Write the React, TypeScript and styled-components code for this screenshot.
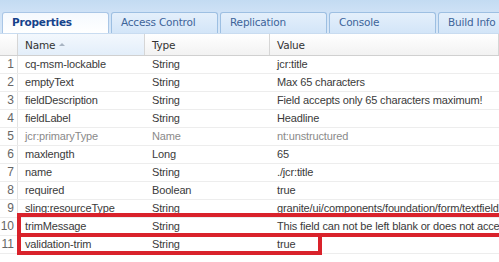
import styled, { createGlobalStyle } from "styled-components";

const GlobalStyle = createGlobalStyle`
  * { box-sizing: border-box; }
  body {
    margin: 0;
    background: #ffffff;
    font-family: "Liberation Sans", Arial, sans-serif;
  }
`;

const Page = styled.div`
  width: 499px;
  height: 262px;
  overflow: hidden;
  background: #ffffff;
`;

const TabStrip = styled.div`
  height: 34px;
  display: flex;
  align-items: flex-end;
  gap: 2px;
  padding-left: 2px;
  background: linear-gradient(#c3dbf2, #cfe2f6 40%, #d9e8f8);
  border-bottom: 1px solid #c9dcf0;
`;

const Tab = styled.div<{ $active?: boolean }>`
  flex: 0 0 107px;
  height: 21px;
  padding: 3px 0 0 9px;
  border: 1px solid ${(p) => (p.$active ? "#a9c6e6" : "#9dbfe2")};
  border-bottom: none;
  border-radius: 3px 3px 0 0;
  font-family: "DejaVu Sans", Tahoma, sans-serif;
  font-size: 10.5px;
  letter-spacing: -0.2px;
  font-weight: ${(p) => (p.$active ? 700 : 400)};
  color: ${(p) => (p.$active ? "#15428b" : "#3d6499")};
  background: ${(p) =>
    p.$active
      ? "linear-gradient(#f5f9fe, #ffffff)"
      : "linear-gradient(#e4effb, #d3e5f8)"};
`;

const Grid = styled.div`
  display: flex;
  flex-direction: column;
`;

const HeaderRow = styled.div`
  display: grid;
  grid-template-columns: 18px 127px 125px 1fr;
  height: 22px;
  background: linear-gradient(#ffffff, #f2f2f2);
  border-bottom: 1px solid #d0d0d0;
`;

const HeadCell = styled.div<{ $sorted?: boolean }>`
  display: flex;
  align-items: center;
  gap: 4px;
  padding-left: 7px;
  font-family: "DejaVu Sans", Tahoma, sans-serif;
  font-size: 10.5px;
  letter-spacing: -0.2px;
  color: #333333;
  border-right: 1px solid #d6d6d6;
  background: ${(p) =>
    p.$sorted ? "linear-gradient(#f3f8fd, #e3eefa)" : "transparent"};
`;

const SortArrow = styled.span`
  width: 0;
  height: 0;
  border-left: 3px solid transparent;
  border-right: 3px solid transparent;
  border-bottom: 3px solid #a8b4c2;
  margin-top: -1px;
`;

const Row = styled.div`
  position: relative;
  display: grid;
  grid-template-columns: 18px 127px 125px 1fr;
  height: 18px;
  border-bottom: 1px solid #ededed;
  font-size: 11px;
  letter-spacing: -0.15px;
`;

const NumCell = styled.div`
  text-align: right;
  padding-right: 3px;
  line-height: 17px;
  font-size: 12px;
  letter-spacing: 0;
  color: #666666;
  border-right: 1px solid #e4e4e4;
`;

const Cell = styled.div<{ $muted?: boolean }>`
  padding-left: 7px;
  line-height: 17px;
  white-space: nowrap;
  overflow: hidden;
  color: ${(p) => (p.$muted ? "#8a8a8a" : "#3a3a3a")};
`;

const Highlight = styled.div<{ $top: number; $height: number; $width: number }>`
  position: absolute;
  left: 17px;
  top: ${(p) => p.$top}px;
  height: ${(p) => p.$height}px;
  width: ${(p) => p.$width}px;
  border: 4px solid #d9222b;
  pointer-events: none;
`;

type Prop = {
  name: string;
  type: string;
  value: string;
  muted?: boolean;
  mark?: { top: number; height: number; width: number };
};

const tabs = ["Properties", "Access Control", "Replication", "Console", "Build Info"];

const props: Prop[] = [
  { name: "cq-msm-lockable", type: "String", value: "jcr:title" },
  { name: "emptyText", type: "String", value: "Max 65 characters" },
  { name: "fieldDescription", type: "String", value: "Field accepts only 65 characters maximum!" },
  { name: "fieldLabel", type: "String", value: "Headline" },
  { name: "jcr:primaryType", type: "Name", value: "nt:unstructured", muted: true },
  { name: "maxlength", type: "Long", value: "65" },
  { name: "name", type: "String", value: "./jcr:title" },
  { name: "required", type: "Boolean", value: "true" },
  { name: "sling:resourceType", type: "String", value: "granite/ui/components/foundation/form/textfield" },
  {
    name: "trimMessage",
    type: "String",
    value: "This field can not be left blank or does not accept white spaces",
    mark: { top: -5, height: 24, width: 500 },
  },
  {
    name: "validation-trim",
    type: "String",
    value: "true",
    mark: { top: -3, height: 22, width: 305 },
  },
];

export default function App() {
  return (
    <>
      <GlobalStyle />
      <Page>
        <TabStrip>
          {tabs.map((t, i) => (
            <Tab key={t} $active={i === 0}>
              {t}
            </Tab>
          ))}
        </TabStrip>
        <Grid>
          <HeaderRow>
            <HeadCell />
            <HeadCell $sorted>
              Name <SortArrow />
            </HeadCell>
            <HeadCell>Type</HeadCell>
            <HeadCell>Value</HeadCell>
          </HeaderRow>
          {props.map((p, i) => (
            <Row key={p.name}>
              <NumCell>{i + 1}</NumCell>
              <Cell $muted={p.muted}>{p.name}</Cell>
              <Cell $muted={p.muted}>{p.type}</Cell>
              <Cell $muted={p.muted}>{p.value}</Cell>
              {p.mark && (
                <Highlight
                  $top={p.mark.top}
                  $height={p.mark.height}
                  $width={p.mark.width}
                />
              )}
            </Row>
          ))}
        </Grid>
      </Page>
    </>
  );
}
